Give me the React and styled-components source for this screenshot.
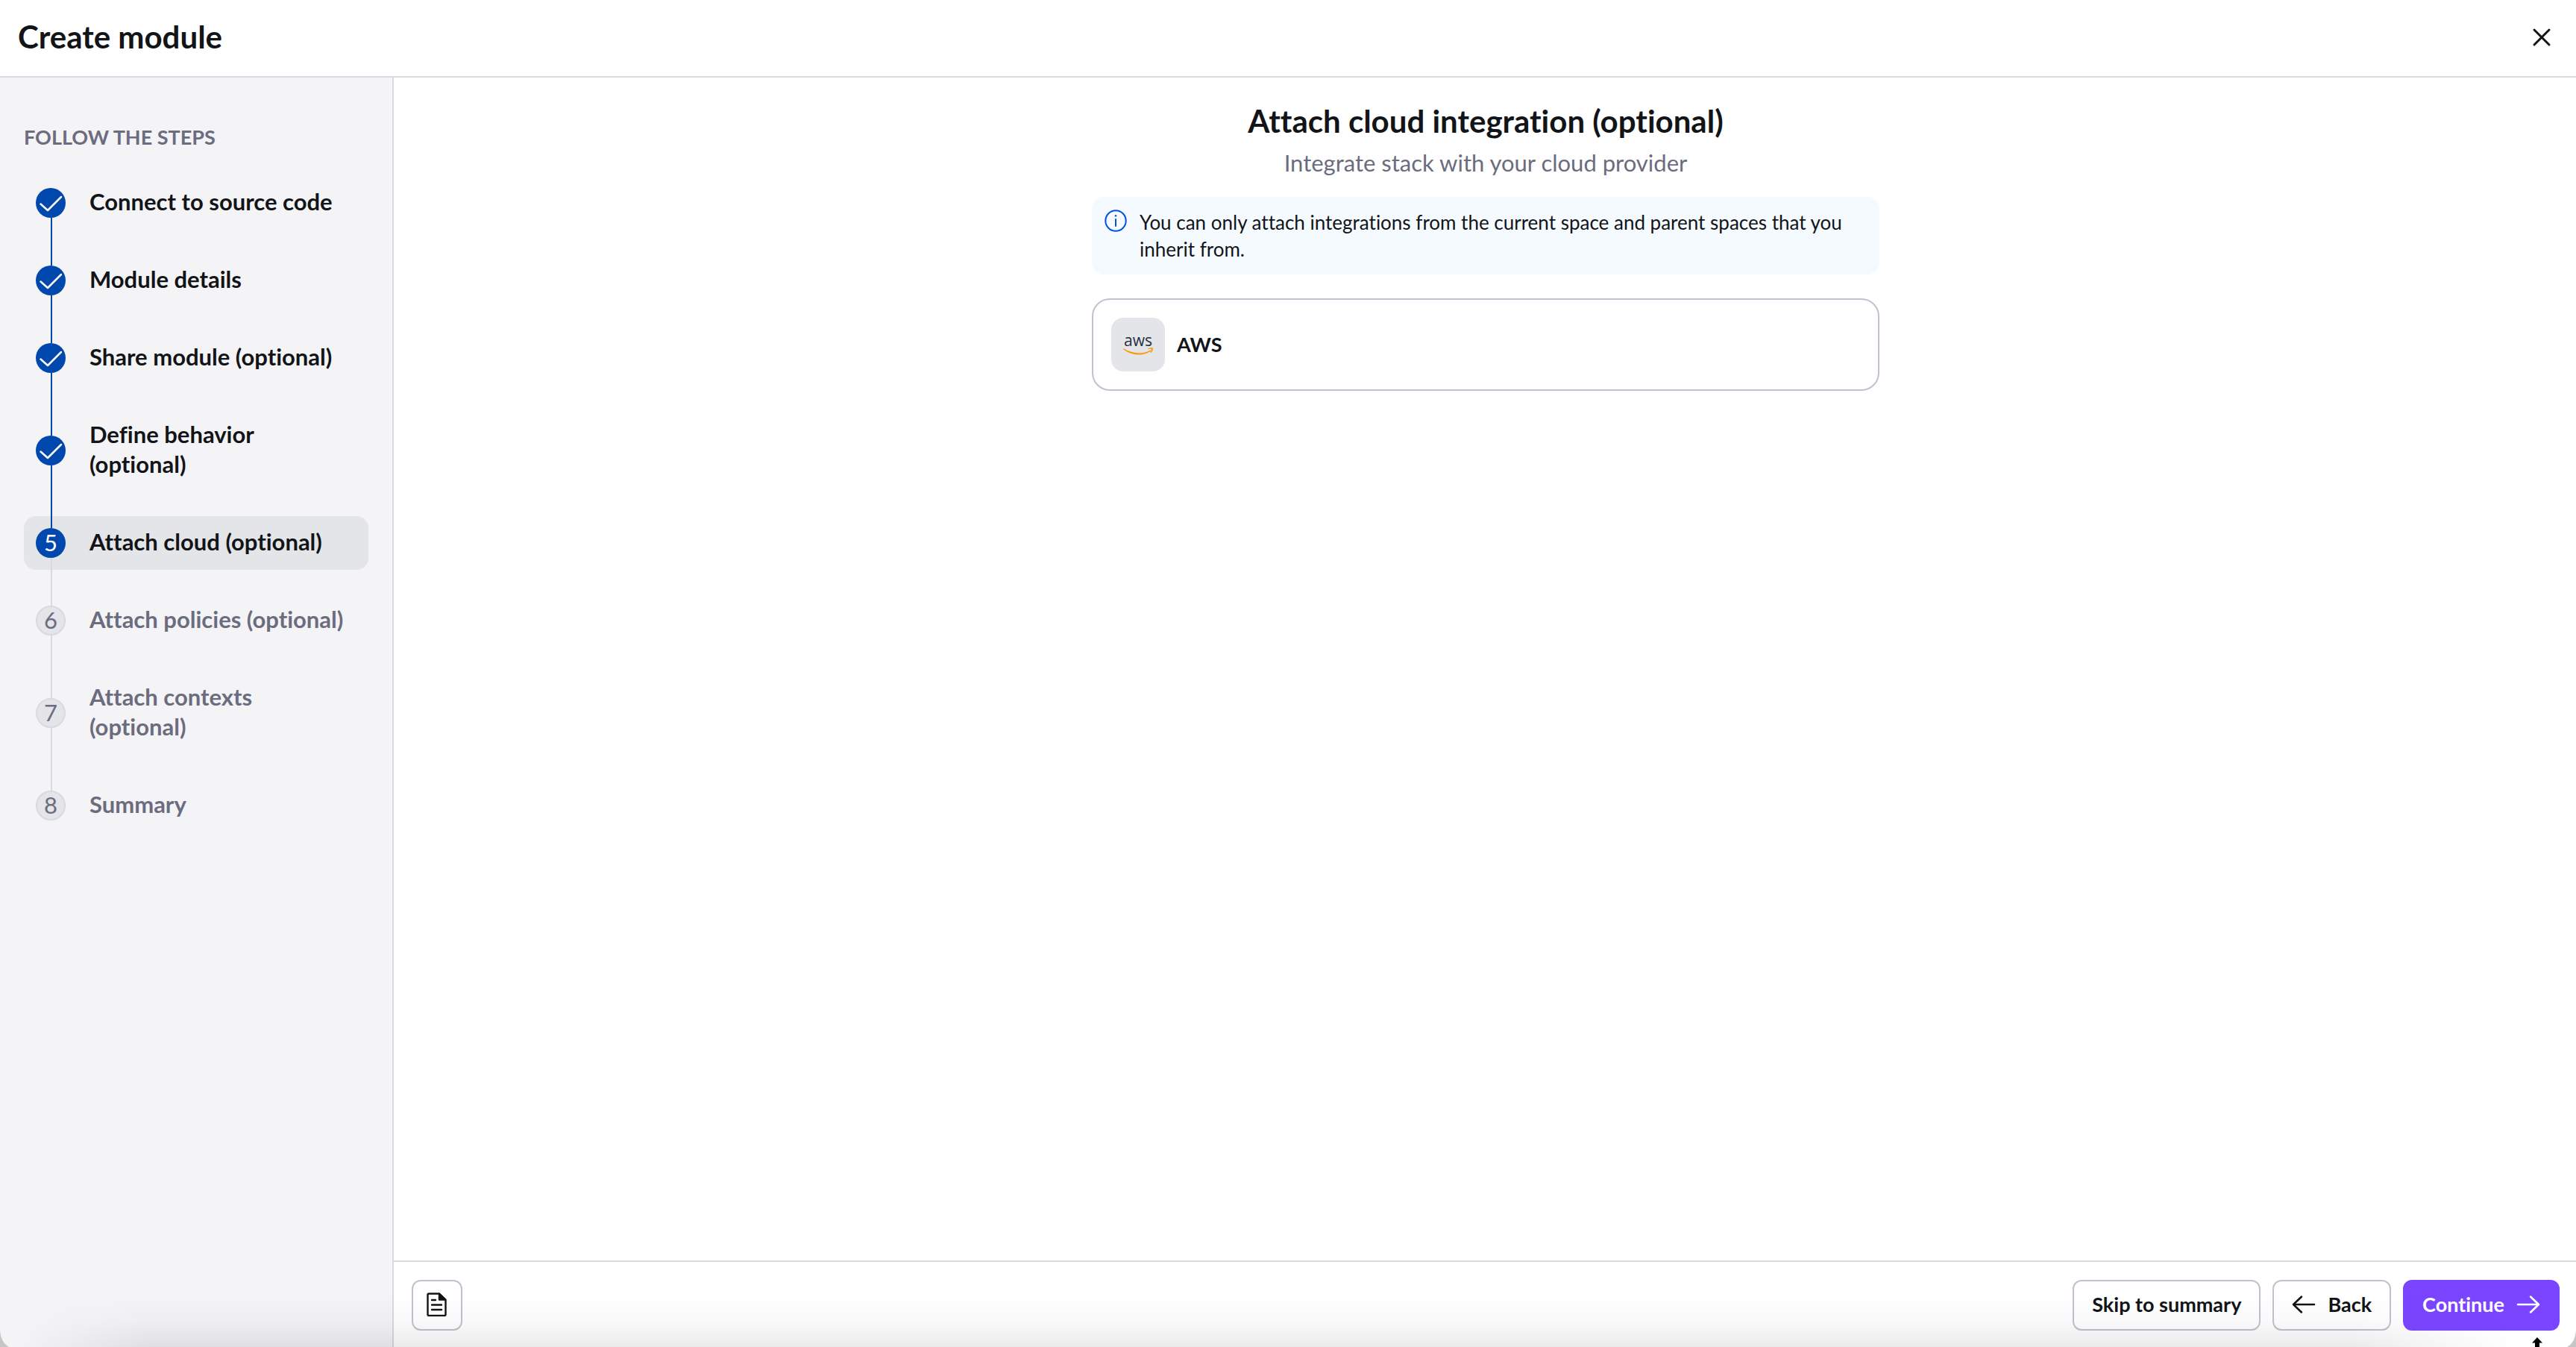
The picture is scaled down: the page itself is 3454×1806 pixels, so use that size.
import React from "react";
import styled, { createGlobalStyle } from "styled-components";

const ink = "#121417";
const muted = "#6b6c7e";
const blue = "#0048ad";
const line = "#d9d9df";
const outline = "#c0c2ce";

const Global = createGlobalStyle`
  *, *::before, *::after { box-sizing: border-box; }
  body { margin: 0; background: #fff; color: ${ink}; font-family: Lato, "Open Sans", sans-serif; font-size: 31px; line-height: 40px; font-variant-ligatures: none; }
  button { font: inherit; font-variant-ligatures: inherit; color: inherit; cursor: pointer; }
  h1, h2, p, ol { margin: 0; padding: 0; }
`;

const Page = styled.div`
  position: relative;
  min-height: 100vh;
  display: flex;
  flex-direction: column;
`;

const Header = styled.header`
  display: flex;
  align-items: center;
  justify-content: space-between;
  height: 104px;
  padding: 0 30px 4px 24px;
  border-bottom: 2px solid ${line};
`;

const Title = styled.h1`
  font-size: 42px;
  line-height: 48px;
  font-weight: 700;
`;

const CloseButton = styled.button`
  display: flex;
  padding: 2px 0 0;
  border: 0;
  background: none;
`;

const Body = styled.div`
  flex: 1;
  display: flex;
`;

const Sidebar = styled.aside`
  flex: none;
  width: 528px;
  padding: 62px 32px;
  background: #f4f4f7;
  border-right: 2px solid ${line};
`;

const SidebarTitle = styled.h2`
  margin-bottom: 34px;
  font-size: 27px;
  line-height: 36px;
  font-weight: 700;
  color: ${muted};
  text-transform: uppercase;
`;

const Steps = styled.ol`
  display: flex;
  flex-direction: column;
  gap: 32px;
  list-style: none;
`;

const Step = styled.li`
  position: relative;
  display: flex;
  align-items: center;
  gap: 32px;
  padding: 16px 24px 16px 16px;
  border-radius: 16px;
  font-weight: 700;
  color: ${(p) => (p.$state === "todo" ? muted : ink)};
  background: ${(p) => (p.$state === "current" ? "#e4e5e9" : "transparent")};

  &::before, &::after {
    content: "";
    position: absolute;
    left: 36px;
    width: 2px;
  }
  &::before {
    top: -16px;
    bottom: calc(50% + 20px);
    background: ${(p) => (p.$state === "todo" ? line : blue)};
  }
  &::after {
    top: calc(50% + 20px);
    bottom: -16px;
    background: ${(p) => (p.$state === "done" ? blue : line)};
  }
  &:first-child::before, &:last-child::after { display: none; }
`;

const StepLabel = styled.span`
  margin: -2px 0 2px;
`;

const Marker = styled.span`
  flex: none;
  display: flex;
  align-items: center;
  justify-content: center;
  width: 40px;
  height: 40px;
  padding-bottom: ${(p) => (p.$state === "done" ? 0 : 2)}px;
  border-radius: 50%;
  font-weight: 400;
  color: ${(p) => (p.$state === "todo" ? muted : "#fff")};
  background: ${(p) => (p.$state === "todo" ? "#e4e5e9" : blue)};
  border: ${(p) => (p.$state === "todo" ? `2px solid ${line}` : "0")};
`;

const Content = styled.div`
  flex: 1;
  display: flex;
  flex-direction: column;
`;

const Main = styled.main`
  flex: 1;
  display: flex;
  flex-direction: column;
  align-items: center;
  padding: 30px 22px 32px 24px;
`;

const Panel = styled.section`
  width: 100%;
  max-width: 1056px;
  display: flex;
  flex-direction: column;
`;

const PanelTitle = styled.h2`
  font-size: 42px;
  line-height: 56px;
  font-weight: 700;
  text-align: center;
`;

const Subtitle = styled.p`
  margin: 8px 0 26px;
  color: ${muted};
  text-align: center;
`;

const Notice = styled.div`
  display: flex;
  gap: 16px;
  padding: 16px;
  margin-bottom: 32px;
  border-radius: 16px;
  background: #f5faff;
  font-size: 26px;
  line-height: 36px;

  svg { flex: none; }
`;

const Provider = styled.button`
  display: flex;
  align-items: center;
  gap: 16px;
  padding: 24px;
  border: 2px solid ${outline};
  border-radius: 24px;
  background: #fff;
  font-size: 27px;
  line-height: 36px;
  font-weight: 700;
  text-align: left;
`;

const Tile = styled.span`
  display: flex;
  align-items: center;
  justify-content: center;
  width: 72px;
  height: 72px;
  border-radius: 16px;
  background: #e4e5e9;
`;

const Footer = styled.footer`
  display: flex;
  align-items: center;
  justify-content: space-between;
  padding: 24px 22px 22px 24px;
  border-top: 2px solid ${line};
`;

const Actions = styled.div`
  display: flex;
  gap: 16px;
`;

const Button = styled.button`
  display: flex;
  align-items: center;
  justify-content: center;
  gap: 16px;
  min-width: 68px;
  height: 68px;
  padding: 0 ${(p) => (p.$icon ? 0 : 24)}px 2px;
  border: 2px solid ${(p) => (p.$primary ? "#7b45ff" : outline)};
  border-radius: 12px;
  background: ${(p) => (p.$primary ? "#7b45ff" : "#fff")};
  color: ${(p) => (p.$primary ? "#fff" : ink)};
  font-size: 27px;
  line-height: 36px;
  font-weight: 700;
`;

const WindowShade = styled.div`
  position: absolute;
  inset: auto 0 0 0;
  height: 72px;
  pointer-events: none;
  background: linear-gradient(to bottom, transparent, rgba(0, 0, 0, 0.02) 50%, rgba(0, 0, 0, 0.08));
  mask-image: linear-gradient(to right, transparent 24px, #000 200px, #000 calc(100% - 300px), transparent calc(100% - 80px));
`;

const Corner = styled.svg`
  position: absolute;
  bottom: 0;
  left: ${(p) => (p.$right ? "auto" : 0)};
  right: ${(p) => (p.$right ? 0 : "auto")};
  transform: ${(p) => (p.$right ? "scaleX(-1)" : "none")};
  pointer-events: none;
`;

const Cursor = styled.svg`
  position: absolute;
  right: 40px;
  bottom: 0;
  pointer-events: none;
`;

const Stroke = ({ size = 32, width = 2, children }) => (
  <svg width={size} height={size} viewBox={`0 0 ${size} ${size}`} fill="none" stroke="currentColor" strokeWidth={width} strokeLinecap="round" strokeLinejoin="round" aria-hidden="true">
    {children}
  </svg>
);

const steps = [
  ["Connect to source code", "done"],
  ["Module details", "done"],
  ["Share module (optional)", "done"],
  ["Define behavior (optional)", "done"],
  ["Attach cloud (optional)", "current"],
  ["Attach policies (optional)", "todo"],
  ["Attach contexts (optional)", "todo"],
  ["Summary", "todo"],
];

export default function App() {
  return (
    <Page>
      <Global />
      <Header>
        <Title>Create module</Title>
        <CloseButton type="button" aria-label="Close">
          <Stroke width={3}><path d="M6 6 26 26M26 6 6 26" /></Stroke>
        </CloseButton>
      </Header>
      <Body>
        <Sidebar>
          <SidebarTitle>Follow the steps</SidebarTitle>
          <Steps>
            {steps.map(([label, state], i) => (
              <Step key={label} $state={state} aria-current={state === "current" ? "step" : undefined}>
                <Marker $state={state}>
                  {state === "done" ? (
                    <Stroke size={40} width={2.5}><path d="M6.500 21.500 16 30 34 12" /></Stroke>
                  ) : (
                    i + 1
                  )}
                </Marker>
                <StepLabel>{label}</StepLabel>
              </Step>
            ))}
          </Steps>
        </Sidebar>
        <Content>
          <Main>
            <Panel>
              <PanelTitle>Attach cloud integration (optional)</PanelTitle>
              <Subtitle>Integrate stack with your cloud provider</Subtitle>
              <Notice>
                <svg width="32" height="32" viewBox="0 0 32 32" fill="none" stroke="#0055d4" strokeWidth="2" strokeLinecap="round" aria-hidden="true">
                  <circle cx="16" cy="16" r="13.7" />
                  <path d="M16 14v9" />
                  <circle cx="16" cy="9.300" r="1.300" fill="#0055d4" stroke="none" />
                </svg>
                <p>You can only attach integrations from the current space and parent spaces that you inherit from.</p>
              </Notice>
              <Provider type="button">
                <Tile>
                  <svg width="48" height="48" viewBox="0 0 48 48" aria-hidden="true">
                    <text x="24" y="26" textAnchor="middle" fontFamily="Open Sans, sans-serif" fontSize="21" fontWeight="500" fill="#252f3e">aws</text>
                    <path d="M4.300 29C16 36.500 30 37.500 40.500 31.500l.9 1.300C30 40 15 39 4 30z" fill="#ff9900" />
                    <path d="M37 29.200c3-1.300 6.300-1.200 6.900-.4.600.9-.4 4.300-2.700 6.400l-.7-.4c.9-2 1.800-4.100 1.300-4.700-.4-.6-2.600-.4-4.700-.2z" fill="#ff9900" />
                  </svg>
                </Tile>
                AWS
              </Provider>
            </Panel>
          </Main>
          <Footer>
            <Button type="button" $icon aria-label="Documentation">
              <svg width="32" height="32" viewBox="0 0 32 32" fill="none" stroke="currentColor" strokeWidth="2.400" strokeLinecap="round" strokeLinejoin="round" aria-hidden="true">
                <path d="M5 1.500h14l8.500 8v20a1.500 1.500 0 0 1-1.500 1.500H5a1.500 1.500 0 0 1-1.500-1.500V3A1.500 1.500 0 0 1 5 1.500z" />
                <path d="M19 1.500v8h8z" fill="currentColor" />
                <path d="M9 10h5M9 16.500h13M9 23h13" />
              </svg>
            </Button>
            <Actions>
              <Button type="button">Skip to summary</Button>
              <Button type="button">
                <Stroke width={2.5}><path d="M30 16H2M13 5.500 2 16l11 10.500" /></Stroke>
                Back
              </Button>
              <Button type="button" $primary>
                Continue
                <Stroke width={2.5}><path d="M2 16h28M19 5.500 30 16 19 26.500" /></Stroke>
              </Button>
            </Actions>
          </Footer>
        </Content>
      </Body>
      <WindowShade />
      <Corner width="12" height="22" viewBox="0 0 12 22"><path d="M0 0C1 11 5 18 12 22H0z" fill="#c6c6c6" /></Corner>
      <Corner $right width="12" height="22" viewBox="0 0 12 22"><path d="M0 0C1 11 5 18 12 22H0z" fill="#c6c6c6" /></Corner>
      <Cursor width="24" height="16" viewBox="0 0 24 16"><path d="M12 3 19 10.500h-4V20H9v-9.500H5z" fill="#000" stroke="#fff" strokeWidth="4" paintOrder="stroke" /></Cursor>
    </Page>
  );
}
